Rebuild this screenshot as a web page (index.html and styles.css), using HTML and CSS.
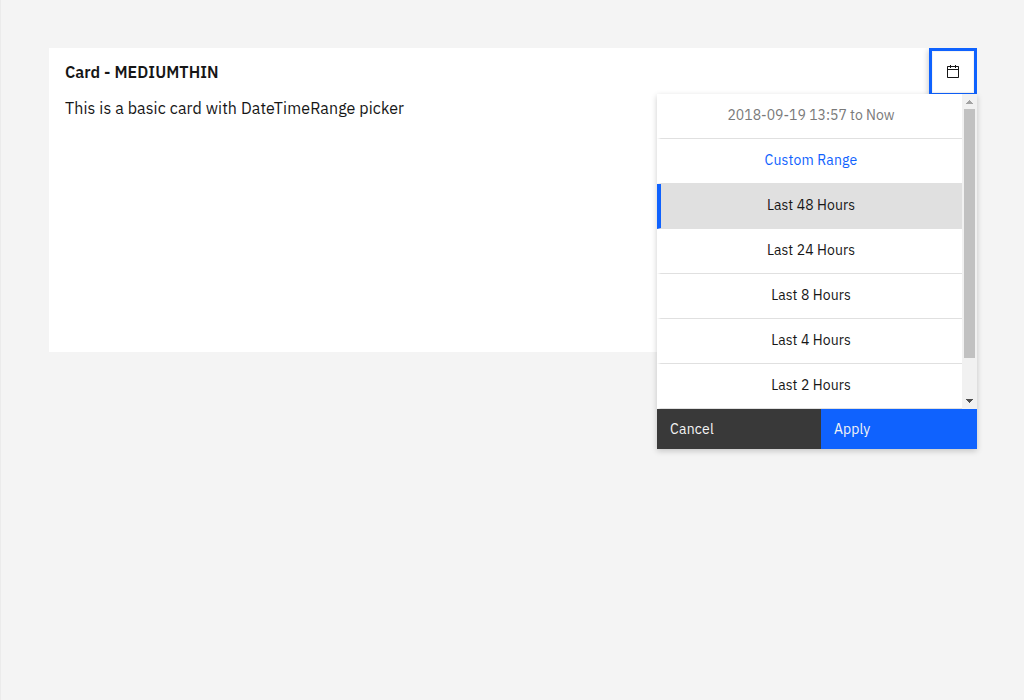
FILE: index.html
```html
<!DOCTYPE html>
<html lang="en">
<head>
<meta charset="utf-8">
<title>Card</title>
<link rel="stylesheet" href="styles.css">
</head>
<body>
<main class="page">
  <section class="card">
    <header class="card-header">
      <h1 class="card-title">Card - MEDIUMTHIN</h1>
      <div class="picker">
        <button class="picker-trigger" aria-label="Select time range">
          <svg width="16" height="16" viewBox="0 0 32 32" fill="#161616"><path d="M26 4h-4V2h-2v2h-8V2h-2v2H6C4.900 4 4 4.900 4 6v20c0 1.100.900 2 2 2h20c1.100 0 2-.900 2-2V6c0-1.100-.900-2-2-2zM26 26H6V12h20V26zM26 10H6V6h4v2h2V6h8v2h2V6h4V10z"/></svg>
        </button>
        <div class="menu">
          <div class="menu-body">
            <ol class="presets">
              <li class="preset current"><span>2018-09-19 13:57 to Now</span></li>
              <li class="preset custom"><span>Custom Range</span></li>
              <li class="preset selected"><span>Last 48 Hours</span></li>
              <li class="preset"><span>Last 24 Hours</span></li>
              <li class="preset"><span>Last 8 Hours</span></li>
              <li class="preset"><span>Last 4 Hours</span></li>
              <li class="preset"><span>Last 2 Hours</span></li>
            </ol>
            <div class="scrollbar">
              <svg class="arrow" width="15" height="15" shape-rendering="crispEdges"><path fill="#a3a3a3" d="M7 6h1v1h1v1h1v1h1v1H4V9h1V8h1V7h1z"/></svg>
              <div class="thumb"></div>
              <svg class="arrow arrow-down" width="15" height="15" shape-rendering="crispEdges"><path fill="#505050" d="M4 5h7v1h-1v1H9v1H8v1H7V8H6V7H5V6H4z"/></svg>
            </div>
          </div>
          <footer class="actions">
            <button class="btn cancel">Cancel</button>
            <button class="btn apply">Apply</button>
          </footer>
        </div>
      </div>
    </header>
    <p class="card-text">This is a basic card with DateTimeRange picker</p>
  </section>
</main>
</body>
</html>
```
FILE: styles.css
```css
* { box-sizing: border-box; }
body {
  margin: 0;
  background: #f4f4f4;
  color: #161616;
  font-family: "IBM Plex Sans", Roboto, "Liberation Sans", sans-serif;
}
.page {
  height: 700px;
  padding: 48px 47px 0 48px;
  border-left: 1px solid #ebebeb;
}
.card { height: 304px; background: #fff; }
.card-header {
  display: flex;
  justify-content: space-between;
  height: 48px;
  padding-left: 16px;
}
.card-title { margin: 0; font-size: 16px; font-weight: 600; line-height: 48px; letter-spacing: .06px; white-space: nowrap; }
.card-text { margin: 0; padding: 0 16px; font-size: 16px; line-height: 24px; letter-spacing: .1px; white-space: nowrap; }
.picker { position: relative; }
.picker-trigger {
  display: flex;
  align-items: center;
  justify-content: center;
  width: 48px;
  height: 48px;
  padding: 0;
  border: 3px solid #0f62fe;
  background: #fff;
  box-shadow: inset 0 0 0 1px #f4f4f4, -1px 2px 6px rgba(0, 0, 0, .2);
  clip-path: inset(0 0 0 -8px);
}
.menu {
  position: absolute;
  top: 46px;
  right: 0;
  width: 320px;
  background: #fff;
  box-shadow: 0 2px 6px rgba(0, 0, 0, .2);
  font-size: 14px;
}
.menu-body { display: flex; height: 315px; }
.presets { flex: 1; margin: 0; padding: 0; list-style: none; }
.preset {
  display: flex;
  align-items: center;
  justify-content: center;
  height: 45px;
  padding: 0 3px 2px 2px;
  border-left: 4px solid transparent;
  border-bottom: 1px solid #e0e0e0;
  letter-spacing: .08px;
  white-space: nowrap;
}
.current { color: #797979; letter-spacing: 0; }
.custom { color: #0f62fe; letter-spacing: .16px; }
.selected { border-left-color: #0f62fe; background: #e0e0e0; }
.scrollbar { display: flex; flex-direction: column; width: 15px; background: #f1f1f1; }
.arrow { display: block; flex: none; }
.arrow-down { margin-top: auto; }
.thumb { height: 249px; margin: 0 2px; background: #c1c1c1; }
.actions { display: flex; height: 40px; }
.btn { padding: 0 13px; border: 0; color: #f4f4f4; font: inherit; text-align: left; }
.cancel { width: 164px; background: #393939; letter-spacing: .24px; }
.apply { flex: 1; background: #0f62fe; letter-spacing: .08px; }
```
